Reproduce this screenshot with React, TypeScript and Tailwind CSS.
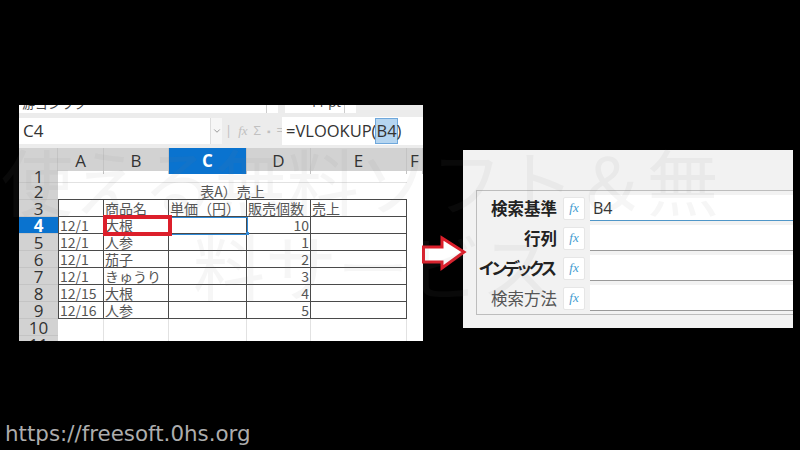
import React from 'react';
import { ChevronDown } from 'lucide-react';

const cols = ['A', 'B', 'C', 'D', 'E', 'F'];

const rows = [
  ['12/1', '大根', '', '10'],
  ['12/1', '人参', '', '1'],
  ['12/1', '茄子', '', '2'],
  ['12/1', 'きゅうり', '', '3'],
  ['12/15', '大根', '', '4'],
  ['12/16', '人参', '', '5'],
];

const params = [
  { label: '検索基準', value: 'B4', active: true, required: true, tight: false },
  { label: '行列', value: '', active: false, required: true, tight: false },
  { label: 'インデックス', value: '', active: false, required: true, tight: true },
  { label: '検索方法', value: '', active: false, required: false, tight: false },
];

const RowHeader = ({ n, h, active }: { n: number | string; h: string; active?: boolean }) => (
  <div
    className={`${h} flex items-center justify-center border-b border-[#c4c4c4] text-[17px] leading-none ${
      active ? 'bg-[#0a73cf] text-white font-bold' : 'bg-[#d2d2d2] text-[#333]'
    }`}
  >
    {n}
  </div>
);

const Cell = ({ children, right }: { children?: React.ReactNode; right?: boolean }) => (
  <div
    className={`border-r border-b border-[#4a4a4a] px-[1px] text-[14px] leading-[16px] text-[#555] whitespace-nowrap overflow-hidden ${
      right ? 'text-right' : ''
    }`}
  >
    {children}
  </div>
);

const Sheet = () => (
  <div className="w-[404px] h-[236px] shrink-0 flex flex-col bg-[#ececec] overflow-hidden font-['Open_Sans',sans-serif]">
    {/* toolbar, cut off by the screenshot */}
    <div className="h-[9px] shrink-0 flex items-end overflow-hidden gap-[7px] pb-[1px]">
      <div className="w-[259px] h-[20px] bg-white flex items-center justify-between shrink-0">
        <span className="pl-[3px] text-[13px] text-[#444] font-['Noto_Sans_CJK_JP',sans-serif]">游ゴシック</span>
        <span className="w-[12px] h-full border-l border-[#ccc]" />
      </div>
      <div className="w-[71px] h-[20px] bg-white flex items-center justify-between shrink-0">
        <span className="pl-[25px] text-[13px] text-[#444]">11 pt</span>
        <span className="w-[12px] h-full border-l border-[#ccc]" />
      </div>
    </div>
    {/* name box and formula bar */}
    <div className="h-[34px] shrink-0 flex items-center">
      <div className="w-[203px] h-[26px] bg-white flex items-center justify-between shrink-0">
        <span className="pl-[4px] text-[17px] text-[#333]">C4</span>
        <span className="w-[12px] h-full bg-[#f6f6f6] border-l border-[#ddd] flex items-center justify-center text-[#888]">
          <ChevronDown size={10} />
        </span>
      </div>
      <div className="w-[60px] pl-[3px] flex items-center gap-[6px] text-[13px] text-[#c0c0c0] shrink-0">
        <span>|</span>
        <span className="italic font-['Liberation_Serif',serif]">fx</span>
        <span>Σ</span>
        <span className="text-[10px]">▪</span>
        <span>=</span>
      </div>
      <div className="flex-1 h-[28px] bg-white flex items-center pl-[4px] text-[16.5px] text-[#333]">
        =VLOOKUP(<span className="bg-[#b5d5f0] outline outline-1 outline-[#6fa8dc]">B4</span>)
      </div>
    </div>
    {/* grid */}
    <div className="relative flex-1 min-h-0 bg-white font-['Noto_Sans_CJK_JP','Noto_Sans',sans-serif]">
      <div className="grid grid-cols-[39px_46px_65px_78px_64px_96px_16px] h-[23px] bg-[#d2d2d2] font-['Open_Sans',sans-serif] text-[17px] text-[#333]">
        <div className="border-r border-[#c4c4c4]" />
        {cols.map((c) => (
          <div
            key={c}
            className={`flex items-center justify-center border-r border-[#c4c4c4] ${
              c === 'C' ? 'bg-[#0a73cf] text-white font-bold' : ''
            }`}
          >
            {c}
          </div>
        ))}
      </div>
      <div className="grid grid-cols-[39px_349px_16px]">
        <div className="flex flex-col font-['Open_Sans',sans-serif]">
          <RowHeader n={1} h="h-[12px]" />
          <RowHeader n={2} h="h-[17px]" />
          <RowHeader n={3} h="h-[17px]" />
          <RowHeader n={4} h="h-[17px]" active />
          <RowHeader n={5} h="h-[17px]" />
          <RowHeader n={6} h="h-[17px]" />
          <RowHeader n={7} h="h-[17px]" />
          <RowHeader n={8} h="h-[17px]" />
          <RowHeader n={9} h="h-[17px]" />
          <RowHeader n={10} h="h-[17px]" />
          <RowHeader n={11} h="h-[17px]" />
        </div>
        <div>
          <div className="h-[12px] border-b border-[#e2e2e2]" />
          <div className="h-[17px] flex items-center justify-center border-b border-[#4a4a4a] text-[14px] text-[#555]">
            表A）売上
          </div>
          <div className="grid grid-cols-[45px_65px_78px_64px_96px] auto-rows-[17px] border-l border-[#4a4a4a]">
            <Cell />
            <Cell>商品名</Cell>
            <Cell>単価（円）</Cell>
            <Cell>販売個数</Cell>
            <Cell>売上</Cell>
            {rows.map((r) => (
              <React.Fragment key={r[0] + r[1]}>
                <Cell>{r[0]}</Cell>
                <Cell>{r[1]}</Cell>
                <Cell />
                <Cell right>{r[3]}</Cell>
                <Cell />
              </React.Fragment>
            ))}
          </div>
          <div className="grid grid-cols-[46px_65px_78px_64px_96px] h-[34px]">
            {cols.slice(0, 5).map((c) => (
              <div key={c} className="border-r border-[#e2e2e2]" />
            ))}
          </div>
        </div>
        <div />
      </div>
      {/* selected cell C4 */}
      <div className="absolute left-[150px] top-[69px] w-[79px] h-[18px] border border-[#2f8ad8]" />
      <div className="absolute left-[227px] top-[84px] w-[3px] h-[3px] bg-[#2f8ad8]" />
      {/* red marker around B4 */}
      <div className="absolute left-[84px] top-[67px] w-[69px] h-[21px] border-[4px] border-[#dc1f2b]" />
    </div>
  </div>
);

const Dialog = () => (
  <div className="w-[330px] h-[178px] mt-[45px] shrink-0 bg-[#f2f2f2] pl-[13px] pt-[40px] font-['Noto_Sans_CJK_JP','Noto_Sans',sans-serif] overflow-hidden">
    <div className="h-[125px] border border-r-0 border-[#bdbdbd] flex flex-col gap-[4px] pt-[4px]">
      {params.map((p) => (
        <div key={p.label} className="h-[26px] flex items-center">
          <div
            className={`w-[80px] text-right text-[16.5px] whitespace-nowrap ${
              p.required ? 'font-bold text-[#222]' : 'text-[#555]'
            } ${p.tight ? 'tracking-[-4px] pr-[4px]' : ''}`}
          >
            {p.label}
          </div>
          <div className="ml-[6px] w-[22px] h-[23px] bg-white border border-[#e6e6e6] rounded-[2px] flex items-center justify-center italic text-[13px] text-[#3f9ad0] font-['Liberation_Serif',serif] shrink-0">
            fx
          </div>
          <div
            className={`ml-[5px] flex-1 h-[26px] bg-white border-b flex items-center pl-[3px] text-[16px] text-[#333] font-['Open_Sans',sans-serif] ${
              p.active ? 'border-[#4f96c8]' : 'border-[#9a9a9a]'
            }`}
          >
            {p.value}
          </div>
        </div>
      ))}
    </div>
  </div>
);

export default function App() {
  return (
    <div className="relative w-[800px] h-[450px] bg-black overflow-hidden flex flex-col justify-between">
      <div className="flex items-start pt-[105px] pl-[19px] gap-[40px]">
        <Sheet />
        <Dialog />
      </div>
      <div className="pl-[5px] pb-[3px] text-[21.4px] leading-[26px] text-[#adadad] font-['DejaVu_Sans',sans-serif]">
        https://freesoft.0hs.org
      </div>

      {/* arrow between the two panels */}
      <svg className="absolute left-[420px] top-[235px]" width="47" height="36" viewBox="0 0 47 36">
        <path d="M3.5 12 H22 V3 L44 17 L22 33 V27 H3.5 Z" fill="#fff" stroke="#dc1f2b" strokeWidth="3" />
      </svg>

      {/* watermark */}
      <div className="absolute inset-x-0 top-[136px] text-[72px] leading-[85px] font-normal text-[#808080]/[0.07] pointer-events-none whitespace-nowrap font-['Noto_Sans_CJK_JP',sans-serif]">
        <div className="pl-[1px]">使える無料ソフト＆無</div>
        <div className="pl-[193px]">料サービス</div>
      </div>
    </div>
  );
}
